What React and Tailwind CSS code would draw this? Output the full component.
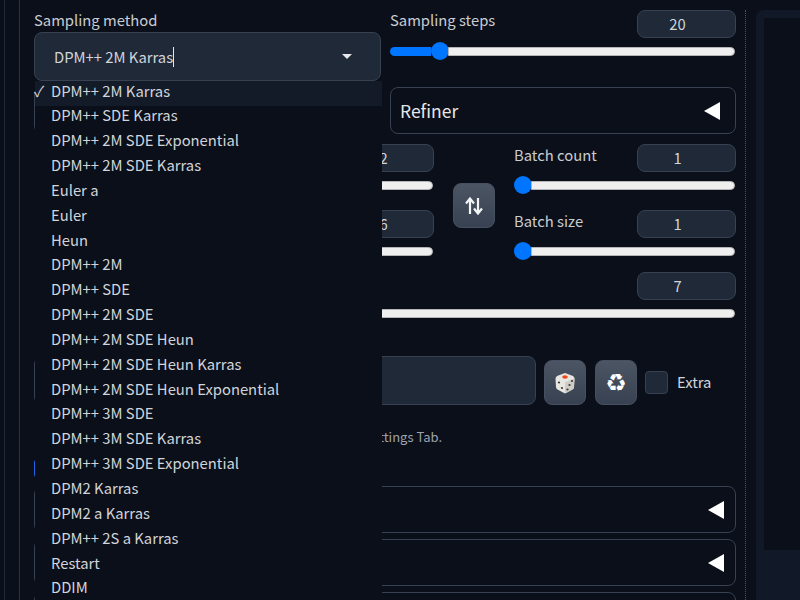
const SAMPLERS = [
  'DPM++ 2M Karras', 'DPM++ SDE Karras', 'DPM++ 2M SDE Exponential', 'DPM++ 2M SDE Karras',
  'Euler a', 'Euler', 'Heun', 'DPM++ 2M', 'DPM++ SDE', 'DPM++ 2M SDE', 'DPM++ 2M SDE Heun',
  'DPM++ 2M SDE Heun Karras', 'DPM++ 2M SDE Heun Exponential', 'DPM++ 3M SDE', 'DPM++ 3M SDE Karras',
  'DPM++ 3M SDE Exponential', 'DPM2 Karras', 'DPM2 a Karras', 'DPM++ 2S a Karras', 'Restart', 'DDIM',
];

function Slider({ fill = 0, className = '' }) {
  return (
    <div className={`mr-[1px] flex h-[18px] items-center ${className}`}>
      <div className="h-[9px] shrink-0 rounded-l-full bg-[#0075ff]" style={{ width: fill }} />
      <div className="h-[18px] w-[18px] shrink-0 rounded-full bg-[#0075ff]" />
      <div className="h-[9px] flex-1 -ml-[1px] rounded-r-full border border-[#b5b5b5] bg-[#efefef]" />
    </div>
  );
}

function NumberBox({ value }) {
  return (
    <div className="flex h-[28px] w-[99px] items-center justify-center rounded-lg border border-[#374151] bg-[#1f2937] pr-[18px] text-[14.8px] text-[#d1d5db]">
      {value}
    </div>
  );
}

function Triangle({ className = '' }) {
  return (
    <svg width="16" height="18" viewBox="0 0 16 18" className={className}>
      <path d="M0 9 L16 0 L16 18 Z" fill="#ffffff" />
    </svg>
  );
}

function Accordion({ label, className = '', triangle = 'mr-[11px]' }) {
  return (
    <div className={`flex h-[47px] items-center justify-between rounded-lg border border-[#374151] pl-[9px] text-[17.5px] text-[#e5e7eb] ${className}`}>
      <span className="pt-[2px]">{label}</span>
      <Triangle className={triangle} />
    </div>
  );
}

function Dice() {
  return (
    <svg width="22" height="22" viewBox="0 0 22 22">
      <path d="M11 1 L19 4 Q20.5 5 20.5 7 L20 15 Q20 16.500 18.500 17.500 L12 21 Q11 21.500 10 21 L3.500 17.500 Q2 16.500 2 15 L1.500 7 Q1.500 5 3 4 Z" fill="#e8e6e1" />
      <path d="M11 10.500 L20.500 6 L20 15 Q20 16.500 18.500 17.500 L12 21 L11 21.200 Z" fill="#cfccc6" />
      <ellipse cx="11" cy="5" rx="2.800" ry="1.700" fill="#f0441f" />
      <circle cx="5" cy="10.500" r="1.100" fill="#3a3a3a" />
      <circle cx="8" cy="16" r="1.100" fill="#3a3a3a" />
      <circle cx="13.500" cy="17.500" r="1.100" fill="#3a3a3a" />
      <circle cx="15.500" cy="13" r="1.100" fill="#3a3a3a" />
      <circle cx="18" cy="9" r="1.100" fill="#3a3a3a" />
    </svg>
  );
}

function SwapIcon() {
  return (
    <svg width="18" height="18" viewBox="0 0 18 18" fill="none" stroke="#f3f4f6" strokeWidth="2.200">
      <path d="M5 17 V2 M1 6.500 L5 1.500 L9 6.500" />
      <path d="M13 1 V16 M9 11.500 L13 16.500 L17 11.500" />
    </svg>
  );
}

function ToolButton({ children, className = '' }) {
  return (
    <div className={`flex items-center justify-center rounded-lg border border-[#465060] bg-gradient-to-b from-[#4b5563] to-[#374151] text-white ${className}`}>
      {children}
    </div>
  );
}

export default function App() {
  return (
    <div
      className="relative flex h-[600px] w-[800px] overflow-hidden bg-[#0b0f19] text-[14.8px] text-[#c9ccd1]"
      style={{ fontFamily: '"Noto Sans CJK SC", "Noto Sans", sans-serif' }}
    >
      {/* left rails */}
      <div className="ml-[4px] h-full w-px shrink-0 bg-[#1f2937]" />
      <div className="ml-[14px] h-full w-px shrink-0 bg-[#2a3342]" />

      {/* settings column */}
      <div className="ml-[14px] w-[702px] shrink-0 pt-[10px]">
        <div className="flex h-[77px] gap-[9px]">
          <div className="w-[347px]">
            <div className="h-[22px] leading-[20px]">Sampling method</div>
            <div className="flex h-[49px] items-center justify-between rounded-lg border border-[#374151] bg-[#1f2937] pl-[19px] pr-[28px] text-[#d1d5db]">
              <span className="border-r border-[#e5e7eb] leading-[20px]">DPM++ 2M Karras</span>
              <span className="h-0 w-0 border-x-[5px] border-t-[5px] border-x-transparent border-t-[#e5e7eb]" />
            </div>
          </div>
          <div className="w-[346px]">
            <div className="flex justify-between">
              <span className="leading-[20px]">Sampling steps</span>
              <NumberBox value="20" />
            </div>
            <Slider fill={41} className="mt-[4px]" />
          </div>
        </div>

        <div className="flex gap-[9px]">
          <Accordion label="" className="w-[347px]" triangle="mr-[15px]" />
          <Accordion label="Refiner" className="w-[346px]" triangle="mr-[15px]" />
        </div>

        <div className="mt-[10px] flex h-[128px]">
          <div className="w-[400px]">
            <div className="flex h-[28px] justify-end">
              <NumberBox value="512" />
            </div>
            <Slider fill={120} className="ml-[2px] mt-[4px]" />
            <div className="mt-[16px] flex h-[28px] justify-end">
              <NumberBox value="576" />
            </div>
            <Slider fill={130} className="ml-[2px] mt-[4px]" />
          </div>
          <ToolButton className="ml-[19px] mt-[39px] h-[45px] w-[42px]"><SwapIcon /></ToolButton>
          <div className="ml-[19px] w-[222px]">
            <div className="flex h-[28px] justify-between">
              <span className="leading-[22px]">Batch count</span>
              <NumberBox value="1" />
            </div>
            <Slider className="mt-[4px]" />
            <div className="mt-[16px] flex h-[28px] justify-between">
              <span className="leading-[22px]">Batch size</span>
              <NumberBox value="1" />
            </div>
            <Slider className="mt-[4px]" />
          </div>
        </div>

        <div className="flex h-[28px] justify-end">
          <NumberBox value="7" />
        </div>
        <Slider fill={60} className="ml-[2px] mt-[4px]" />

        <div className="mt-[34px] flex h-[49px] items-center">
          <div className="h-[49px] w-[502px] rounded-lg border border-[#374151] bg-[#1f2937]" />
          <ToolButton className="ml-[8px] mt-[4px] h-[45px] w-[42px]"><Dice /></ToolButton>
          <ToolButton className="ml-[9px] mt-[4px] h-[45px] w-[42px] text-[24px]">
            <span style={{ fontFamily: '"DejaVu Sans", sans-serif' }}>♻</span>
          </ToolButton>
          <div className="ml-[8px] mt-[4px] h-[23px] w-[23px] rounded border border-[#374151] bg-[#1f2937]" />
          <span className="ml-[9px] mt-[3px] text-[#d1d5db]">Extra</span>
        </div>

        <div className="mt-[22px] w-[408px] whitespace-nowrap text-right text-[13px] leading-[20px] text-[#9ca3af]">
          Settings Tab.
        </div>

        <div className="mt-[12px] h-[19px] w-[19px] rounded-sm bg-[#2563eb]" />

        <div className="mt-[8px] flex flex-col gap-[6px]">
          <Accordion label="" />
          <Accordion label="" />
          <Accordion label="" />
        </div>
      </div>

      {/* divider */}
      <div className="ml-[9px] mt-[10px] h-full w-0 shrink-0 border-l border-dotted border-[#4b5563]" />

      {/* output panel */}
      <div className="ml-[10px] mt-[10px] h-full flex-1 rounded-tl-lg bg-[#111827] pl-[8px] pt-[8px]">
        <div className="h-[532px] bg-[#0b0f19]" />
      </div>

      {/* open dropdown */}
      <ul className="absolute left-[35px] top-[81px] h-[540px] w-[347px] bg-[#0b0f19] text-[#d1d5db]">
        {SAMPLERS.map((name, i) => (
          <li
            key={name}
            className={`relative flex h-[24.85px] items-center pb-[5px] pl-[16px] leading-none ${i === 0 ? 'bg-[#141b28]' : ''}`}
          >
            {i === 0 && <span className="absolute -left-[1px] text-[15px]">✓</span>}
            {name}
          </li>
        ))}
      </ul>
    </div>
  );
}
